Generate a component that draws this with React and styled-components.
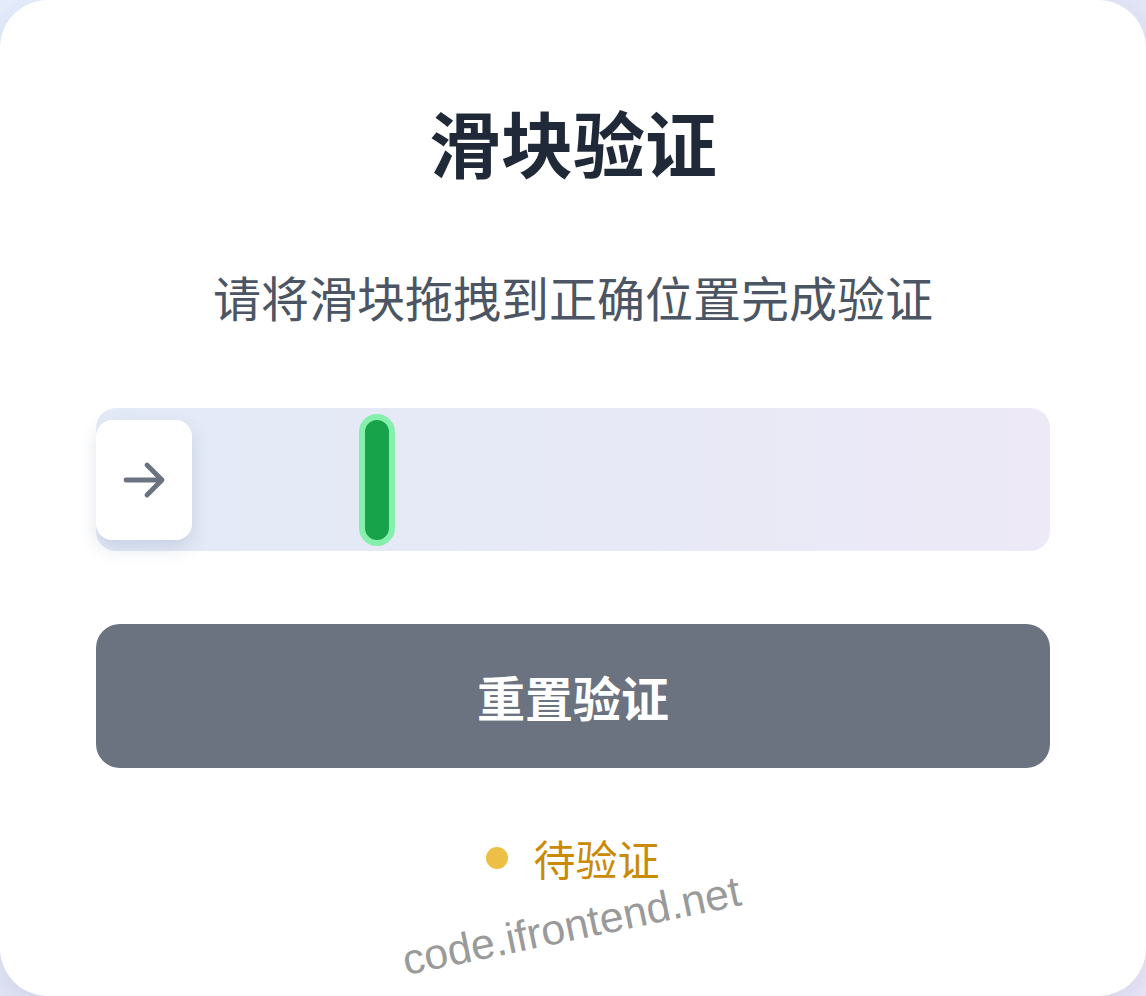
import React from 'react';
import styled, { createGlobalStyle } from 'styled-components';

const GlobalStyle = createGlobalStyle`
  * { box-sizing: border-box; }
  html, body {
    margin: 0;
    padding: 0;
  }
  body {
    background: linear-gradient(135deg, #e6eefc 0%, #e4e6f6 60%, #ece8fa 100%);
    font-family: "Noto Sans CJK SC", "Noto Sans", sans-serif;
  }
`;

const Card = styled.div`
  position: relative;
  width: 1146px;
  height: 996px;
  background: #ffffff;
  border-radius: 48px;
  box-shadow: 0 12px 40px rgba(100, 116, 160, 0.18);
  padding: 105px 96px 0;
  display: flex;
  flex-direction: column;
  align-items: center;
  overflow: hidden;
`;

const Title = styled.h1`
  margin: 0;
  font-size: 72px;
  line-height: 1;
  font-weight: 700;
  color: #1f2937;
`;

const Hint = styled.p`
  margin: 95px 0 0;
  font-size: 48px;
  line-height: 1;
  font-weight: 400;
  color: #4b5563;
`;

const Track = styled.div`
  position: relative;
  margin-top: 88px;
  width: 100%;
  height: 143px;
  border-radius: 20px;
  background: linear-gradient(90deg, #e3eaf7 0%, #e7e9f6 50%, #ede9f7 100%);
`;

const Handle = styled.div`
  position: absolute;
  left: 0;
  top: 12px;
  width: 96px;
  height: 120px;
  border-radius: 16px;
  background: #ffffff;
  box-shadow: 0 8px 18px rgba(71, 85, 125, 0.16);
  display: flex;
  align-items: center;
  justify-content: center;
  color: #6b7280;
`;

const Target = styled.div`
  position: absolute;
  top: 6px;
  left: ${p => p.$offset}px;
  width: 36px;
  height: 132px;
  border-radius: 18px;
  background: #16a34a;
  border: 6px solid #86efac;
`;

const ResetButton = styled.button`
  margin-top: 73px;
  width: 100%;
  height: 144px;
  border: none;
  border-radius: 24px;
  background: #6b7280;
  color: #ffffff;
  font-family: inherit;
  font-size: 48px;
  font-weight: 700;
  cursor: pointer;
`;

const Status = styled.div`
  margin-top: 69px;
  display: flex;
  align-items: center;
  gap: 25px;
  font-size: 42px;
  line-height: 1;
  font-weight: 400;
  color: #ca8a04;
`;

const Dot = styled.span`
  width: 22px;
  height: 22px;
  border-radius: 50%;
  background: #eebf45;
`;

const Watermark = styled.div`
  position: absolute;
  left: 408px;
  top: 936px;
  font-family: "Liberation Sans", Arial, sans-serif;
  font-size: 43px;
  color: #9a9a9a;
  transform: rotate(-11.8deg);
  transform-origin: left bottom;
  white-space: nowrap;
  pointer-events: none;
`;

function ArrowIcon() {
  return (
    <svg width="48" height="48" viewBox="0 0 24 24" fill="none" stroke="currentColor"
      strokeWidth="2.4" strokeLinecap="round" strokeLinejoin="round">
      <path d="M13.5 4.5 21 12l-7.5 7.5M21 12H3" />
    </svg>
  );
}

export default function App() {
  return (
    <>
      <GlobalStyle />
      <Card>
        <Title>滑块验证</Title>
        <Hint>请将滑块拖拽到正确位置完成验证</Hint>
        <Track>
          <Target $offset={263} />
          <Handle>
            <ArrowIcon />
          </Handle>
        </Track>
        <ResetButton>重置验证</ResetButton>
        <Status>
          <Dot />
          <span>待验证</span>
        </Status>
        <Watermark>code.ifrontend.net</Watermark>
      </Card>
    </>
  );
}
